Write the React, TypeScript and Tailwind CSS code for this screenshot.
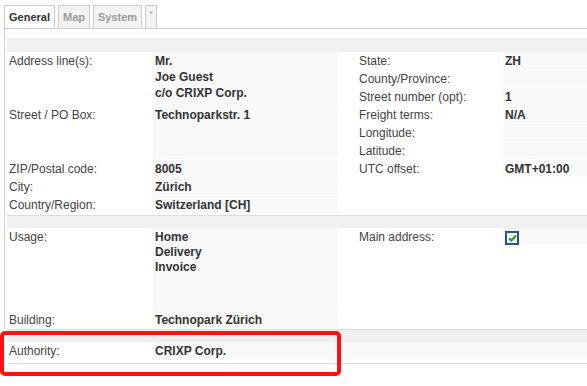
import { ReactNode } from "react";

type Field = { label: string; value?: ReactNode; h?: string; lead?: string };

const ADDRESS_LEFT: Field[] = [
  { label: "Address line(s):", value: ["Mr.", "Joe Guest", "c/o CRIXP Corp."], h: "h-[53px]" },
  { label: "Street / PO Box:", value: ["Technoparkstr. 1"], h: "h-[53px]" },
  { label: "ZIP/Postal code:", value: ["8005"] },
  { label: "City:", value: ["Zürich"] },
  { label: "Country/Region:", value: ["Switzerland [CH]"] },
];

const ADDRESS_RIGHT: Field[] = [
  { label: "State:", value: ["ZH"] },
  { label: "County/Province:" },
  { label: "Street number (opt):", value: ["1"] },
  { label: "Freight terms:", value: ["N/A"] },
  { label: "Longitude:" },
  { label: "Latitude:" },
  { label: "UTC offset:", value: ["GMT+01:00"] },
];

const USAGE_LEFT: Field[] = [
  { label: "Usage:", value: ["Home", "Delivery", "Invoice"], h: "h-[82px]", lead: "leading-[15px] pt-[2px]" },
  { label: "Building:", value: ["Technopark Zürich"] },
];

function Row({ field, valueWidth }: { field: Field; valueWidth: string }) {
  const lines = Array.isArray(field.value) ? (field.value as string[]) : null;
  return (
    <div className={`flex ${field.h ?? "h-[17px]"}`}>
      <div className="w-[146px] shrink-0 pl-[2px] pt-px leading-[16px] text-[#444]">{field.label}</div>
      <div className={`${valueWidth} bg-[#f8f8f8] pl-[2px] font-bold ${field.lead ?? "leading-[16px] pt-px"}`}>
        {lines ? lines.map((l) => <div key={l}>{l}</div>) : field.value}
      </div>
    </div>
  );
}

function Column({ fields, valueWidth }: { fields: Field[]; valueWidth: string }) {
  return (
    <div className="flex flex-col gap-px">
      {fields.map((f) => (
        <Row key={f.label} field={f} valueWidth={valueWidth} />
      ))}
    </div>
  );
}

function Checkbox() {
  return (
    <div className="mt-[3px] ml-[2px] w-[14px] h-[14px] border-2 border-[#24548a] bg-white flex items-center justify-center">
      <svg width="9" height="8" viewBox="0 0 9 8">
        <path d="M1 4.2 L3.4 6.5 L8 1.5" fill="none" stroke="#1ca21c" strokeWidth="2.2" />
      </svg>
    </div>
  );
}

const TABS = [
  { name: "General", active: true },
  { name: "Map" },
  { name: "System" },
];

export default function App() {
  return (
    <div className="relative w-[587px] h-[386px] overflow-hidden bg-white text-[12px] text-[#333] font-['Liberation_Sans',Arial,sans-serif]">
      <div className="ml-[4px] pt-[5px] flex gap-[3px] border-b border-[#cccccc]">
        {TABS.map((t) => (
          <div
            key={t.name}
            className={`h-[23px] px-[4px] border border-b-0 border-[#cccccc] text-[11px] font-bold leading-[22px] ${
              t.active ? "bg-white text-[#333]" : "bg-[#f3f3f3] text-[#9a9a9a]"
            }`}
          >
            {t.name}
          </div>
        ))}
        <div className="h-[23px] w-[12px] border border-b-0 border-[#cccccc] bg-[#f3f3f3] text-[8px] text-[#999] text-center leading-[16px]">
          *
        </div>
      </div>

      <div className="ml-[4px] border-l border-[#d4d4d4] pl-[2px] pt-[9px]">
        <div className="h-[14px] bg-[#f0f0f0]" />
        <div className="flex pb-[2px] border-b border-[#dcdcdc]">
          <Column fields={ADDRESS_LEFT} valueWidth="w-[185px]" />
          <div className="ml-[19px]">
            <Column fields={ADDRESS_RIGHT} valueWidth="w-[90px]" />
          </div>
        </div>

        <div className="h-[12px] bg-[#f0f0f0]" />
        <div className="flex pb-px border-b border-[#dcdcdc]">
          <Column fields={USAGE_LEFT} valueWidth="w-[185px]" />
          <div className="ml-[19px]">
            <div className="flex h-[17px]">
              <div className="w-[146px] pl-[2px] pt-px leading-[16px] text-[#444]">Main address:</div>
              <div className="w-[90px] bg-[#f8f8f8]">
                <Checkbox />
              </div>
            </div>
          </div>
        </div>
      </div>

      <div className="ml-[7px]">
        <div className="h-[12px] bg-[#f0f0f0]" />
        <div className="pb-[4px] border-b border-[#dcdcdc]">
          <Column fields={[{ label: "Authority:", value: ["CRIXP Corp."] }]} valueWidth="flex-1" />
        </div>
      </div>

      <div className="absolute left-0 top-[331px] w-[341px] h-[45px] border-4 border-[#ff1010] rounded-[5px]" />
    </div>
  );
}
